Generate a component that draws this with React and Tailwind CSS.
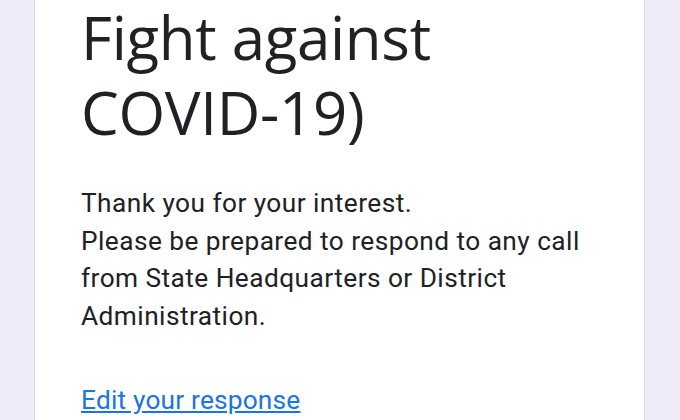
export default function App() {
  return (
    <div className="min-h-[420px] h-[420px] overflow-hidden bg-[#f0ebf8] flex justify-center">
      <div className="ml-[-1px] w-[611px] bg-white border-x border-[#dadce0] pl-[46px] pr-[45px]">
        <h1
          className="text-[60px] leading-[75px] text-[#202124] font-normal tracking-[-0.3px]"
          style={{ fontFamily: '"Open Sans", "Noto Sans", sans-serif' }}
        >
          Fight against
          <br />
          COVID-19)
        </h1>
        <div
          className="mt-[35px] text-[26.25px] leading-[37.5px] text-[#202124] tracking-[0.45px]"
          style={{ fontFamily: 'Roboto, "Liberation Sans", sans-serif' }}
        >
          <p>Thank you for your interest.</p>
          <p>Please be prepared to respond to any call from State Headquarters or District Administration.</p>
          <a href="#" className="block mt-[47px] text-[#1a73e8] tracking-[0.2px] underline underline-offset-2">
            Edit your response
          </a>
        </div>
      </div>
    </div>
  );
}
